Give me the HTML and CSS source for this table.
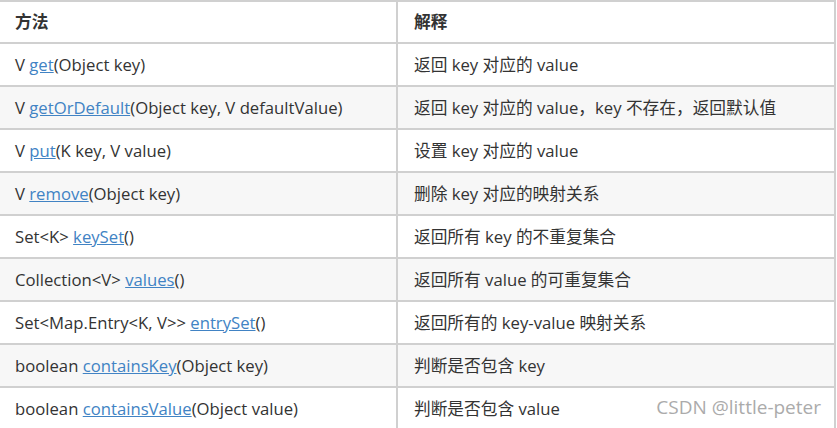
FILE: index.html
```html
<!DOCTYPE html>
<html lang="zh">
<head>
<meta charset="utf-8">
<link rel="stylesheet" href="styles.css">
</head>
<body>
<div class="frame">
<table class="api">
  <thead>
    <tr><th>方法</th><th>解释</th></tr>
  </thead>
  <tbody>
    <tr><td>V <a href="#">get</a>(Object key)</td><td>返回 key 对应的 value</td></tr>
    <tr><td>V <a href="#">getOrDefault</a>(Object key, V defaultValue)</td><td>返回 key 对应的 value，key 不存在，返回默认值</td></tr>
    <tr><td>V <a href="#">put</a>(K key, V value)</td><td>设置 key 对应的 value</td></tr>
    <tr><td>V <a href="#">remove</a>(Object key)</td><td>删除 key 对应的映射关系</td></tr>
    <tr><td>Set&lt;K&gt; <a href="#">keySet</a>()</td><td>返回所有 key 的不重复集合</td></tr>
    <tr><td>Collection&lt;V&gt; <a href="#">values</a>()</td><td>返回所有 value 的可重复集合</td></tr>
    <tr><td>Set&lt;Map.Entry&lt;K, V&gt;&gt; <a href="#">entrySet</a>()</td><td>返回所有的 key-value 映射关系</td></tr>
    <tr><td>boolean <a href="#">containsKey</a>(Object key)</td><td>判断是否包含 key</td></tr>
    <tr><td>boolean <a href="#">containsValue</a>(Object value)</td><td>判断是否包含 value</td></tr>
  </tbody>
</table>
<div class="watermark">CSDN @little-peter</div>
</div>
</body>
</html>
```

FILE: styles.css
```css
html, body {
  margin: 0;
  padding: 0;
  background: #ffffff;
  overflow: hidden;
}
.frame {
  position: relative;
  width: 837px;
  height: 428px;
  overflow: hidden;
}
.api {
  border-collapse: separate;
  border-spacing: 0;
  width: 836px;
  table-layout: fixed;
  border-top: 2px solid #d0d0d0;
  font-family: "Open Sans", "Noto Sans CJK SC", sans-serif;
  font-size: 16.7px;
  color: #333333;
}
.api th, .api td {
  text-align: left;
  border-bottom: 2px solid #d0d0d0;
  border-right: 2px solid #d0d0d0;
  line-height: 21px;
  padding: 10px 15px;
  white-space: nowrap;
}
.api th:first-child, .api td:first-child {
  width: 366px;
}
.api th {
  font-weight: bold;
  padding: 9px 15px 10px;
}
.api td:last-child, .api th:last-child {
  padding-left: 16px;
}
.api tbody tr:nth-child(even) td {
  background: #f7f7f7;
}
.api a {
  color: #4183c4;
  text-decoration: underline;
}
.watermark {
  position: absolute;
  right: 16px;
  bottom: 8px;
  font-family: "Open Sans", sans-serif;
  font-size: 19px;
  color: #ababab;
}
```
